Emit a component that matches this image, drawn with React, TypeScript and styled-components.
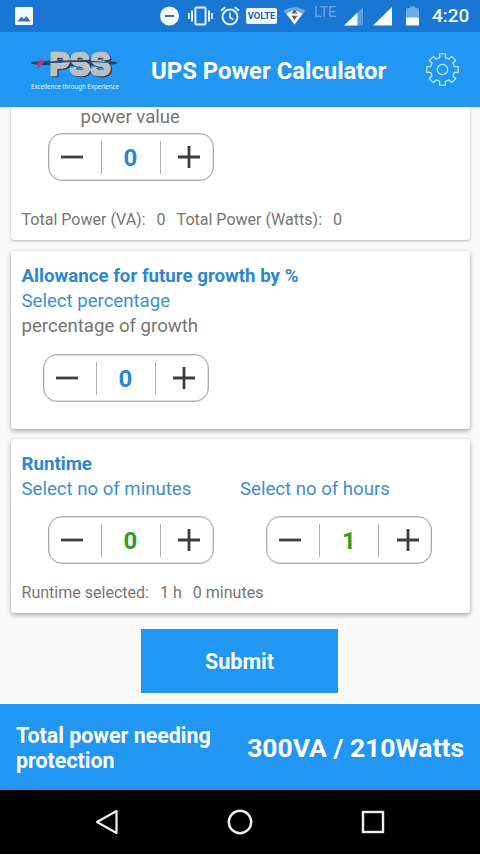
import React from "react";
import styled, { createGlobalStyle } from "styled-components";

const GlobalStyle = createGlobalStyle`
  * { box-sizing: border-box; }
  html, body { margin: 0; padding: 0; }
  body { font-family: Roboto, "Noto Sans", sans-serif; background: #fafafa; overflow: hidden; }
`;

const BLUE = "#2196f3";

const Screen = styled.div`
  width: 480px;
  height: 854px;
  display: flex;
  flex-direction: column;
  background: #fafafa;
  overflow: hidden;
`;

const StatusBar = styled.header`
  height: 32px;
  flex: none;
  display: flex;
  align-items: center;
  background: #1976d2;
  color: #f2faff;
  padding: 0 11px 0 15px;

  svg { display: block; flex: none; }
`;

const StatusItem = styled.div<{ $gap: number }>`
  flex: none;
  margin-left: ${(p) => p.$gap}px;
`;

const Spacer = styled.div`
  flex: 1;
`;

const VolteBadge = styled.div`
  width: 31px;
  height: 16px;
  border-radius: 2px;
  background: #f2faff;
  color: #1f5fae;
  font-size: 9.3px;
  line-height: 16px;
  font-weight: 700;
  text-align: center;
`;

const NetworkLabel = styled.div`
  width: 24px;
  height: 22px;
  font-size: 14.5px;
  line-height: 16px;
  letter-spacing: -0.2px;
  color: #64a8ea;
`;

const Clock = styled.div`
  width: 37px;
  font-size: 19px;
  line-height: 32px;
  font-weight: 500;
  white-space: nowrap;
`;

const AppBar = styled.div`
  height: 75px;
  flex: none;
  display: flex;
  align-items: center;
  background: ${BLUE};
  padding: 0 20px 0 28px;

  svg { display: block; flex: none; overflow: visible; }
`;

const AppTitle = styled.h1`
  margin: 2px 0 0 27px;
  flex: 1;
  font-size: 23.9px;
  line-height: 30px;
  font-weight: 700;
  color: #fff;
  white-space: nowrap;
`;

const Content = styled.main`
  height: 597px;
  flex: none;
  overflow: hidden;
  display: flex;
  flex-direction: column;
  align-items: center;
`;

const Card = styled.section<{ $height: number; $first?: boolean }>`
  width: 459px;
  height: ${(p) => p.$height}px;
  flex: none;
  margin-bottom: ${(p) => (p.$first ? 11 : 10)}px;
  padding: ${(p) => (p.$first ? "0" : "12px")} 11px 0;
  background: #fff;
  border-radius: ${(p) => (p.$first ? "0 0 3px 3px" : "3px")};
  box-shadow: ${(p) =>
    p.$first
      ? "0 1px 3px rgba(0, 0, 0, 0.28)"
      : "0 2px 5px rgba(0, 0, 0, 0.32), 0 0 2px rgba(0, 0, 0, 0.1)"};
`;

const CardTitle = styled.h2`
  margin: 0;
  padding-top: 1px;
  font-size: 18.7px;
  line-height: 24px;
  font-weight: 700;
  color: #2a88d2;
  white-space: nowrap;
`;

const Prompt = styled.div`
  font-size: 18.6px;
  line-height: 26px;
  color: #3c90cf;
  white-space: nowrap;
`;

const Hint = styled.div<{ $indent?: number }>`
  margin-left: ${(p) => p.$indent ?? 0}px;
  font-size: 18.6px;
  line-height: ${(p) => (p.$indent ? 21 : 25)}px;
  color: #757575;
  white-space: nowrap;
`;

const Summary = styled.div<{ $top: number }>`
  display: flex;
  gap: 11px;
  margin-top: ${(p) => p.$top}px;
  font-size: 16.05px;
  line-height: 22px;
  color: #757575;
  white-space: nowrap;
`;

const Columns = styled.div`
  display: grid;
  grid-template-columns: 218.5px 1fr;
`;

const StepperBox = styled.div<{ $left: number; $top: number }>`
  width: 166px;
  height: 48px;
  margin: ${(p) => p.$top}px 0 0 ${(p) => p.$left}px;
  display: grid;
  grid-template-columns: 52px 60px 1fr;
  align-items: center;
  border: 1px solid #acacac;
  box-shadow: inset 0 0 0 0.5px #c4c4c4;
  border-radius: 14px;
`;

const StepButton = styled.button<{ $before?: number; $after?: number }>`
  height: 100%;
  padding: 0 ${(p) => p.$after ?? 0}px 0 ${(p) => p.$before ?? 0}px;
  border: 0;
  background: none;
  display: flex;
  align-items: center;
  justify-content: center;

  svg { display: block; flex: none; }
`;

const StepValue = styled.output<{ $color: string }>`
  height: 33px;
  padding-top: 2px;
  border: solid #adadad;
  border-width: 0 1px;
  font-size: 24px;
  line-height: 31px;
  font-weight: 700;
  text-align: center;
  color: ${(p) => p.$color};
`;

const SubmitButton = styled.button`
  width: 197px;
  height: 64px;
  margin: 6px 1px 0 0;
  flex: none;
  border: 0;
  padding: 1px 0 0;
  background: ${BLUE};
  color: #fff;
  font: 700 21.5px Roboto, sans-serif;
`;

const Footer = styled.footer`
  height: 86px;
  flex: none;
  display: flex;
  align-items: center;
  justify-content: space-between;
  padding: 2px 16px 0;
  background: ${BLUE};
  color: #fff;
  font-weight: 700;
  white-space: nowrap;
`;

const FooterLabel = styled.div`
  width: 210px;
  font-size: 21.4px;
  line-height: 25.5px;
  white-space: normal;
`;

const FooterTotal = styled.div`
  font-size: 26.5px;
  line-height: 30px;
`;

const NavBar = styled.nav`
  height: 64px;
  flex: none;
  display: flex;
  justify-content: space-between;
  padding: 19px 94px 0;
  background: #000;

  svg { display: block; }
`;

function Stepper({ value, color, left, top }: { value: number; color: string; left: number; top: number }) {
  return (
    <StepperBox $left={left} $top={top}>
      <StepButton $after={6} aria-label="Decrease">
        <svg width="24" height="24" viewBox="0 0 24 24">
          <path d="M1 12H23" stroke="#3d3d3d" strokeWidth="2.8" />
        </svg>
      </StepButton>
      <StepValue $color={color}>{value}</StepValue>
      <StepButton $before={5} aria-label="Increase">
        <svg width="24" height="24" viewBox="0 0 24 24">
          <path d="M1 12H23M12 1V23" stroke="#3d3d3d" strokeWidth="2.8" />
        </svg>
      </StepButton>
    </StepperBox>
  );
}

function Logo() {
  return (
    <svg width="96" height="58" viewBox="28 40.5 96 58">
      <defs>
        <linearGradient id="metal" x1="0" y1="0" x2="0" y2="1">
          <stop offset="0" stopColor="#cfcfcf" />
          <stop offset="1" stopColor="#aeb2b5" />
        </linearGradient>
      </defs>
      <ellipse cx="74" cy="62.5" rx="43.5" ry="3" fill="#16407c" />
      <g fontFamily="Liberation Sans" fontWeight="700" fontSize="31" strokeWidth="2.6" strokeLinejoin="round">
        <text x="51" y="75.6" textLength="61" lengthAdjust="spacingAndGlyphs" fill="#28394a" stroke="#28394a">PSS</text>
        <text x="49.500" y="74.600" textLength="61" lengthAdjust="spacingAndGlyphs" fill="url(#metal)" stroke="#bdbfc1">PSS</text>
      </g>
      <path d="M49 61.2C68 59 96 58.8 117.500 63.500C98 60.800 70 61 49 62.800Z" fill="#27496f" />
      <path d="M43.500 55L41.200 61L45.500 60.500L41 64.500L37 69L38.500 63.800L35.500 64L40 60.500Z" fill="#d92d5c" />
      <text x="31" y="88.300" textLength="88" lengthAdjust="spacingAndGlyphs" fontFamily="Noto Sans" fontSize="7" fill="#e8f6ff">
        Excellence through Experience
      </text>
    </svg>
  );
}

function GearIcon() {
  const teeth = [0, 45, 90, 135, 180, 225, 270, 315];
  const point = (deg: number, r: number) => {
    const a = (deg * Math.PI) / 180;
    return `${(17 + r * Math.sin(a)).toFixed(2)} ${(17 - r * Math.cos(a)).toFixed(2)}`;
  };
  const outline =
    teeth
      .map((t, i) =>
        `${i ? "L" : "M"}${point(t - 13, 12.2)}L${point(t - 10.5, 16)}L${point(t + 10.5, 16)}L${point(t + 13, 12.2)}A12.2 12.2 0 0 1 ${point(t + 32, 12.2)}`
      )
      .join("") + "Z";
  return (
    <svg width="34" height="34" viewBox="0.5 0.5 34 34" fill="none" stroke="#c5f0ff" strokeWidth="1.2" strokeLinejoin="round">
      <path d={outline} />
      <circle cx="17" cy="17" r="5.200" />
    </svg>
  );
}

function Status() {
  return (
    <StatusBar>
      <StatusItem $gap={0}>
        <svg width="18" height="18" viewBox="0 0 18 18">
          <rect width="18" height="18" rx="1.500" fill="#f5fbff" />
          <path d="M2.500 14.500L6.500 9.500L8.800 12L11.500 9L15.500 14.500Z" fill="#2f78a8" />
        </svg>
      </StatusItem>
      <Spacer />
      <StatusItem $gap={0}>
        <svg width="20" height="20" viewBox="0 0 20 20">
          <circle cx="9.500" cy="10" r="9.500" fill="#f5fbff" />
          <path d="M5 10H14" stroke="#3f6484" strokeWidth="1.800" />
        </svg>
      </StatusItem>
      <StatusItem $gap={8}>
        <svg width="25" height="20" viewBox="0 0 25 20" fill="none" stroke="#e6f3ff">
          <rect x="7.400" y="1.500" width="10.200" height="17" rx="1" strokeWidth="2" />
          <path d="M4 4.500V15.500M21 4.500V15.500" strokeWidth="2" />
          <path d="M1 7V13M24 7V13" strokeWidth="1.800" />
        </svg>
      </StatusItem>
      <StatusItem $gap={7}>
        <svg width="20" height="20" viewBox="0 0 20 20" fill="none" stroke="#e6f3ff" strokeWidth="2">
          <circle cx="10" cy="11" r="7.500" />
          <path d="M10 6.500V11.500L13.300 13.500" strokeWidth="1.600" />
          <path d="M1 4.800L5.200 1.200M19 4.800L14.800 1.200" />
        </svg>
      </StatusItem>
      <StatusItem $gap={6}>
        <VolteBadge>VOLTE</VolteBadge>
      </StatusItem>
      <StatusItem $gap={6}>
        <svg width="23" height="18" viewBox="0 0 23 18">
          <path d="M0.500 4Q11.500 -3.500 22.500 4L11.500 17.500Z" fill="#69aae8" />
          <path d="M3.500 6.800Q11.500 0.500 19.500 6.800L11.500 17.500Z" fill="#f5fbff" />
          <path d="M8.500 6.500L11.500 2.300L14.500 6.500ZM8.500 8.800L11.500 13L14.500 8.800Z" fill="#695f55" />
        </svg>
      </StatusItem>
      <StatusItem $gap={8}>
        <NetworkLabel>LTE</NetworkLabel>
      </StatusItem>
      <StatusItem $gap={6}>
        <svg width="19" height="20" viewBox="0 0 19 20">
          <path d="M0 19.500L19 1V19.500Z" fill="#559fe8" />
          <path d="M0 19.500L13.500 6.500V19.500Z" fill="#f5fbff" />
        </svg>
      </StatusItem>
      <StatusItem $gap={10}>
        <svg width="19" height="20" viewBox="0 0 19 20">
          <path d="M0 19.500L19 1V19.500Z" fill="#f5fbff" />
        </svg>
      </StatusItem>
      <StatusItem $gap={14}>
        <svg width="13" height="20" viewBox="0 0 13 20">
          <path d="M1.500 2H4V0.500H9V2H11.500Q13 2 13 3.500V12H0V3.500Q0 2 1.500 2Z" fill="#69aae8" />
          <path d="M0 11.500H13V18.500Q13 19.500 12 19.500H1Q0 19.500 0 18.500Z" fill="#f5fbff" />
        </svg>
      </StatusItem>
      <StatusItem $gap={13}>
        <Clock>4:20</Clock>
      </StatusItem>
    </StatusBar>
  );
}

export default function App() {
  return (
    <>
      <GlobalStyle />
      <Screen>
        <Status />
        <AppBar>
          <Logo />
          <AppTitle>UPS Power Calculator</AppTitle>
          <GearIcon />
        </AppBar>
        <Content>
          <Card $height={133} $first>
            <Hint $indent={59}>power value</Hint>
            <Stepper value={0} color="#2a88d2" left={26} top={5} />
            <Summary $top={28}>
              <span>Total Power (VA):</span>
              <span>0</span>
              <span>Total Power (Watts):</span>
              <span>0</span>
            </Summary>
          </Card>
          <Card $height={178}>
            <CardTitle>Allowance for future growth by %</CardTitle>
            <Prompt>Select percentage</Prompt>
            <Hint>percentage of growth</Hint>
            <Stepper value={0} color="#2a88d2" left={21} top={15} />
          </Card>
          <Card $height={174}>
            <CardTitle>Runtime</CardTitle>
            <Columns>
              <div>
                <Prompt>Select no of minutes</Prompt>
                <Stepper value={0} color="#359a1d" left={26} top={14} />
              </div>
              <div>
                <Prompt>Select no of hours</Prompt>
                <Stepper value={1} color="#359a1d" left={26} top={14} />
              </div>
            </Columns>
            <Summary $top={18}>
              <span>Runtime selected:</span>
              <span>1 h</span>
              <span>0 minutes</span>
            </Summary>
          </Card>
          <SubmitButton>Submit</SubmitButton>
        </Content>
        <Footer>
          <FooterLabel>Total power needing protection</FooterLabel>
          <FooterTotal>300VA / 210Watts</FooterTotal>
        </Footer>
        <NavBar>
          <svg width="26" height="26" viewBox="0 0 26 26" fill="none" stroke="#eee" strokeWidth="2.200" strokeLinejoin="round">
            <path d="M3 13L22.500 2V24Z" />
          </svg>
          <svg width="26" height="26" viewBox="0 0 26 26" fill="none" stroke="#eee" strokeWidth="2.400">
            <circle cx="13" cy="13" r="11.200" />
          </svg>
          <svg width="26" height="26" viewBox="0 0 26 26" fill="none" stroke="#eee" strokeWidth="2.400">
            <rect x="3" y="3" width="20" height="20" />
          </svg>
        </NavBar>
      </Screen>
    </>
  );
}
